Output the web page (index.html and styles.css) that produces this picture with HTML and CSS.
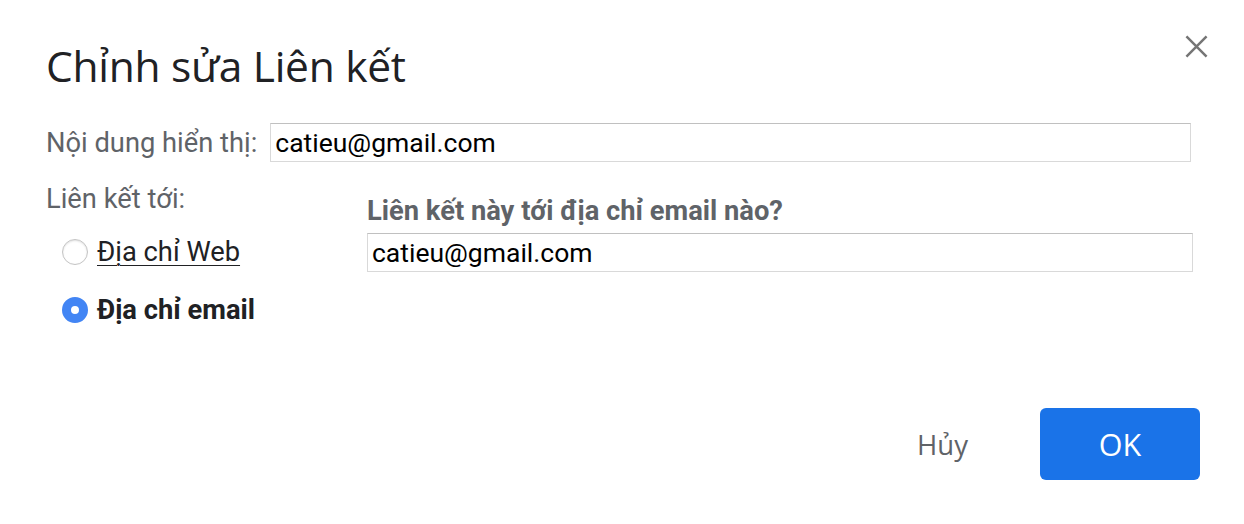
FILE: index.html
```html
<!DOCTYPE html>
<html lang="vi">
<head>
<meta charset="utf-8">
<title>Chỉnh sửa Liên kết</title>
<link rel="stylesheet" href="styles.css">
</head>
<body>
<div class="dialog">
  <div class="header">
    <h1 class="title">Chỉnh sửa Liên kết</h1>
    <button class="close" aria-label="Đóng">
      <svg width="24" height="24" viewBox="0 0 24 24"><path d="M1.5 1.5 L22.5 22.5 M22.5 1.5 L1.5 22.5" stroke="#757575" stroke-width="2.6" fill="none"/></svg>
    </button>
  </div>
  <div class="row-text">
    <label class="label" for="t1">Nội dung hiển thị:</label>
    <input id="t1" class="input input-text" type="text" value="catieu@gmail.com">
  </div>
  <div class="link-section">
    <div class="link-types">
      <div class="label">Liên kết tới:</div>
      <div class="radio-row first"><span class="radio"></span><span class="radio-label link">Địa chỉ Web</span></div>
      <div class="radio-row second"><span class="radio checked"></span><span class="radio-label bold">Địa chỉ email</span></div>
    </div>
    <div class="link-target">
      <div class="question">Liên kết này tới địa chỉ email nào?</div>
      <input class="input input-email" type="text" value="catieu@gmail.com">
    </div>
  </div>
  <div class="footer">
    <button class="btn-cancel">Hủy</button>
    <button class="btn-ok">OK</button>
  </div>
</div>
</body>
</html>
```

FILE: styles.css
```css
* { box-sizing: border-box; }
html, body { margin: 0; padding: 0; background: #fff; }
body { font-family: Roboto, "Liberation Sans", sans-serif; }

.dialog {
  width: 1244px;
  height: 524px;
  padding: 40px 28px 0 46px;
}

.header {
  display: flex;
  justify-content: space-between;
  align-items: flex-start;
}
.title {
  margin: 0;
  font-family: "Open Sans", sans-serif;
  font-weight: 400;
  font-size: 42.5px;
  line-height: 52px;
  color: #202124;
  letter-spacing: -0.3px;
}
.close {
  width: 40px;
  height: 40px;
  margin-top: -14px;
  padding: 0;
  border: 0;
  background: transparent;
  display: flex;
  align-items: center;
  justify-content: center;
}
.close svg { width: 23px; height: 23px; }

.label {
  font-size: 27.3px;
  line-height: 30px;
  color: #5f6368;
  white-space: nowrap;
}

.row-text {
  margin-top: 31px;
  display: flex;
  align-items: center;
  padding-right: 25px;
}
.input {
  height: 39px;
  border: 1px solid #d9d9d9;
  border-top-color: #c0c0c0;
  border-radius: 0;
  font-family: Roboto, "Liberation Sans", sans-serif;
  font-size: 26.5px;
  color: #000;
  padding: 0 4px;
  outline: none;
  background: #fff;
}
.input-text {
  flex: 1;
  margin-left: 13px;
}

.link-section {
  margin-top: 22px;
  display: grid;
  grid-template-columns: 321px 1fr;
}
.link-types { display: flex; flex-direction: column; }
.radio-row {
  display: flex;
  align-items: center;
  height: 30px;
  padding-left: 16px;
  gap: 9px;
}
.radio-row.first { margin-top: 23px; }
.radio-row.second { margin-top: 28px; }
.radio {
  width: 26px;
  height: 26px;
  border-radius: 50%;
  border: 1px solid #c4c4c4;
  background: #fff;
  box-shadow: inset 0 1px 2px rgba(0,0,0,0.12);
  flex: none;
}
.radio.checked {
  border: 9px solid #4285f4;
  background: #fff;
  box-shadow: none;
}
.radio-label {
  font-size: 27.3px;
  color: #202124;
  white-space: nowrap;
}
.radio-label.link { text-decoration: underline; text-underline-offset: 4px; text-decoration-thickness: 1px; }
.radio-label.bold { font-weight: 700; }

.link-target {
  display: flex;
  flex-direction: column;
  padding-top: 12px;
  padding-right: 23px;
}
.question {
  font-size: 27.3px;
  font-weight: 700;
  line-height: 30px;
  color: #5f6368;
  white-space: nowrap;
}
.input-email {
  margin-top: 7px;
  width: 100%;
}

.footer {
  margin-top: 83px;
  display: flex;
  justify-content: flex-end;
  align-items: center;
  padding-right: 16px;
}
.btn-cancel {
  border: 0;
  background: transparent;
  font-family: "Open Sans", sans-serif;
  font-weight: 500;
  font-size: 27.5px;
  color: #5f6368;
  padding: 0 24px;
  height: 72px;
  margin-right: 48px;
}
.btn-ok {
  width: 160px;
  height: 72px;
  border: 0;
  border-radius: 6px;
  background: #1a73e8;
  color: #fff;
  font-family: "Open Sans", sans-serif;
  font-weight: 500;
  font-size: 30.5px;
}
```
